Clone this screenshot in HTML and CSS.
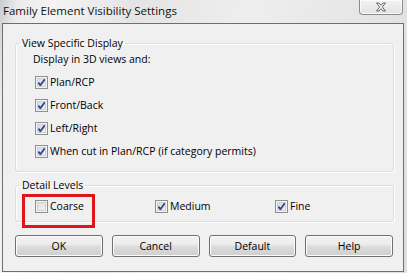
FILE: index.html
```html
<!DOCTYPE html>
<html lang="en">
<head>
    <meta charset="UTF-8">
    <meta name="viewport" content="width=device-width, initial-scale=1.0">
    <title>Family Element Visibility Settings</title>
    <link rel="stylesheet" href="styles.css">
</head>
<body>
    <div class="window">
        <div class="titlebar">
            <span class="title">Family Element Visibility Settings</span>
            <div class="close-btn">
                <svg width="12" height="10" viewBox="0 0 12 10">
                    <path d="M1.5 1 L4 1 L6 3.3 L8 1 L10.5 1 L7.3 5 L10.5 9 L8 9 L6 6.7 L4 9 L1.5 9 L4.7 5 Z" fill="#f4f4f4" stroke="#5a5a5a" stroke-width="0.9" stroke-linejoin="round"/>
                </svg>
            </div>
        </div>
        <div class="client">
            <fieldset class="group view-group">
                <legend>View Specific Display</legend>
                <div class="group-body">
                    <div class="sub-label">Display in 3D views and:</div>
                    <div class="check-list">
                        <div class="check-row"><span class="box checked"></span>Plan/RCP</div>
                        <div class="check-row"><span class="box checked"></span>Front/Back</div>
                        <div class="check-row"><span class="box checked"></span>Left/Right</div>
                        <div class="check-row"><span class="box checked"></span>When cut in Plan/RCP (if category permits)</div>
                    </div>
                </div>
            </fieldset>
            <fieldset class="group detail-group">
                <legend>Detail Levels</legend>
                <div class="detail-row">
                    <div class="check-row coarse"><span class="box"></span>Coarse</div>
                    <div class="check-row medium"><span class="box checked"></span>Medium</div>
                    <div class="check-row fine"><span class="box checked"></span>Fine</div>
                </div>
                <div class="highlight"></div>
            </fieldset>
            <div class="buttons">
                <button>OK</button>
                <button>Cancel</button>
                <button>Default</button>
                <button>Help</button>
            </div>
        </div>
    </div>
</body>
</html>
```

FILE: styles.css
```css
body {
    margin: 0;
    padding: 0;
    width: 407px;
    height: 273px;
    overflow: hidden;
    font-family: "Open Sans", "Liberation Sans", sans-serif;
    font-size: 10.5px;
    color: #000;
    background: #d9dde2;
}
.window {
    height: 273px;
    padding: 0 3px 1px 2px;
    box-sizing: border-box;
    background: linear-gradient(100deg, #c9ccd0 0%, #ebebeb 4%, #f4f4f4 12%, #e4e4e4 30%, #eeeeee 55%, #e6e6e6 80%, #dedede 100%);
    display: flex;
    flex-direction: column;
}
.titlebar {
    height: 23px;
    display: flex;
    justify-content: space-between;
    align-items: flex-start;
}
.title {
    font-size: 11.5px;
    line-height: 16px;
    padding: 3px 0 0 1px;
    color: #111;
}
.close-btn {
    width: 44px;
    height: 15px;
    margin-right: 1px;
    box-sizing: border-box;
    border: 1px solid #8c8c8c;
    border-top: none;
    border-radius: 0 0 4px 4px;
    background: linear-gradient(#f2f2f2, #e3e3e3);
    box-shadow: inset 0 0 0 1px rgba(255, 255, 255, 0.7);
    display: flex;
    justify-content: center;
    align-items: center;
}
.client {
    flex: 1;
    background: #f0f0f0;
    border: 1px solid #6e6e6e;
    padding: 13px 10px 0 12px;
}
.group {
    margin: 0;
    padding: 0 0 0 4px;
    border: 1px solid #d5dfe5;
    border-radius: 3px;
    box-shadow: inset 1px 1px 0 #fff, 1px 1px 0 #fff;
    width: 379px;
    box-sizing: border-box;
}
.group legend {
    padding: 0 2px;
    margin: 0;
    line-height: 13px;
}
.view-group {
    height: 135px;
}
.group-body {
    padding: 2px 0 0 13px;
}
.sub-label {
    line-height: 14px;
    margin-bottom: 9px;
}
.check-list {
    display: flex;
    flex-direction: column;
    gap: 9px;
    padding-left: 2px;
}
.check-row {
    display: flex;
    align-items: center;
    line-height: 14px;
}
.box {
    width: 13px;
    height: 13px;
    box-sizing: border-box;
    border: 1px solid #8e8f8f;
    background: linear-gradient(135deg, #dcdcdc, #f6f6f6);
    box-shadow: inset 0 0 0 1px #f4f4f4, inset 0 0 0 2px #d0d0d0;
    margin-right: 2px;
}
.box.checked {
    background-color: #e8ecf4;
    background-image: url("data:image/svg+xml,%3Csvg xmlns='http://www.w3.org/2000/svg' width='11' height='11' viewBox='0 0 11 11'%3E%3Cpath d='M2.3 5.6 L4.4 8.2 L8.8 2.2' fill='none' stroke='%232f4a8f' stroke-width='1.9'/%3E%3C/svg%3E"), linear-gradient(135deg, #cfd5e0, #f4f6fa);
    background-repeat: no-repeat;
    background-position: center;
}
.detail-group {
    position: relative;
    margin-top: 7px;
    height: 43px;
}
.detail-row {
    display: flex;
    padding: 7px 0 0 15px;
}
.detail-row .coarse {
    width: 120px;
}
.detail-row .medium {
    width: 120px;
}
.highlight {
    position: absolute;
    left: 6px;
    top: 2px;
    width: 73px;
    height: 34px;
    box-sizing: border-box;
    border: 3px solid #e0141b;
}
.buttons {
    display: flex;
    gap: 9px;
    margin-top: 13px;
}
button {
    width: 88px;
    height: 22px;
    font-family: "Open Sans", "Liberation Sans", sans-serif;
    font-size: 10.5px;
    color: #000;
    border: 1px solid #707070;
    border-radius: 3px;
    background: linear-gradient(#f2f2f2 0%, #ebebeb 45%, #dddddd 50%, #cfcfcf 100%);
    box-shadow: inset 0 0 0 1px #fcfcfc;
    padding: 0;
}
```
